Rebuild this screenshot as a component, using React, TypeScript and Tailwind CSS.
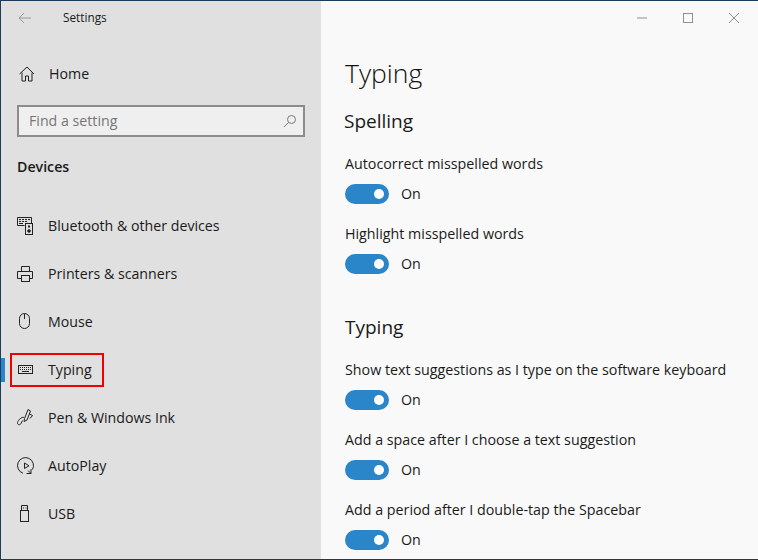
import React from "react";

const font = { fontFamily: '"Open Sans", "Noto Sans", sans-serif' };

function BluetoothIcon() {
  return (
    <svg width="18" height="18" viewBox="0 0 18 18" fill="none" stroke="#222" strokeWidth="1">
      <path d="M.5.5h14v6M.5.5v8h7" />
      <path d="M2 2.500h2M5 2.500h2M8 2.500h2M11 2.500h2M2 4.500h2M5 4.500h2M8 4.500h2M2 6.500h4" />
      <rect x="8.500" y="6.500" width="7" height="11" />
      <circle cx="12" cy="14" r="1.300" fill="#222" />
      <path d="M11 9.500h2" strokeWidth="2" />
    </svg>
  );
}

function PrinterIcon() {
  return (
    <svg width="18" height="18" viewBox="0 0 18 18" fill="none" stroke="#222" strokeWidth="1">
      <path d="M4.500 6.500v-5h8v5M4.500 13.500h-4v-7h15v7h-3" />
      <rect x="4.500" y="10.500" width="8" height="6" />
    </svg>
  );
}

function MouseIcon() {
  return (
    <svg width="18" height="18" viewBox="0 0 18 18" fill="none" stroke="#222" strokeWidth="1">
      <rect x="2.500" y=".5" width="10" height="15" rx="5" />
      <path d="M7.500 1v5" />
    </svg>
  );
}

function KeyboardIcon() {
  return (
    <svg width="16" height="12" viewBox="0 0 16 12" fill="none" stroke="#222" strokeWidth="1">
      <rect x=".5" y="1.500" width="14" height="8" />
      <path d="M2 3.500h11M2 5.500h11" strokeDasharray="1 1" />
      <path d="M4 7.500h7" />
    </svg>
  );
}

function PenIcon() {
  return (
    <svg width="18" height="18" viewBox="0 0 18 18" fill="none" stroke="#222" strokeWidth="1">
      <path d="M7.500 9.500l3.500-9 2.500 1.500-3.500 9" />
      <path d="M7.500 9.500l-.5 3 3-1.500" />
      <path d="M12.500 5l3 1.500-2.500 3" />
      <path d="M7 8.500c-2-1-6 2.500-6.500 5-.3 2.500 2.500 3 3.500 1l1.500-3" />
    </svg>
  );
}

function AutoPlayIcon() {
  return (
    <svg width="18" height="18" viewBox="0 0 18 18" fill="none" stroke="#222" strokeWidth="1">
      <path d="M6 16.200a8 8 0 1 1 9.500-3.700" />
      <path d="M7.500 6v5.500l4.500-2.700z" />
      <path d="M14 12v4.500h-4.500M14 16.500l-3-3" />
    </svg>
  );
}

function UsbIcon() {
  return (
    <svg width="18" height="18" viewBox="0 0 18 18" fill="none" stroke="#222" strokeWidth="1">
      <rect x="3.500" y="5.500" width="8" height="11" />
      <path d="M4.500 5.500v-5h6v5" />
      <path d="M6 3h1M8.500 3h1" />
    </svg>
  );
}

function HomeIcon() {
  return (
    <svg width="16" height="16" viewBox="0 0 16 16" fill="none" stroke="#222" strokeWidth="1">
      <path d="M.5 8L8 1l7 7" />
      <path d="M3 6.500v8.500h3.500v-5h3v5H13v-8.500" />
    </svg>
  );
}

const navItems = [
  { label: "Bluetooth & other devices", icon: <BluetoothIcon /> },
  { label: "Printers & scanners", icon: <PrinterIcon /> },
  { label: "Mouse", icon: <MouseIcon /> },
  { label: "Typing", icon: <KeyboardIcon />, active: true },
  { label: "Pen & Windows Ink", icon: <PenIcon /> },
  { label: "AutoPlay", icon: <AutoPlayIcon /> },
  { label: "USB", icon: <UsbIcon /> },
];

function Toggle({ label }: { label: string }) {
  return (
    <div className="h-[70px]">
      <div className="text-[14.270px] leading-5 text-[#1a1a1a]">{label}</div>
      <div className="mt-[10px] flex items-center gap-[12px]">
        <div className="flex h-5 w-11 items-center justify-end rounded-full bg-[#2a86c8] pr-[5px]">
          <div className="h-[10px] w-[10px] rounded-full bg-white" />
        </div>
        <span className="text-[14.270px] leading-5 text-[#1a1a1a]">On</span>
      </div>
    </div>
  );
}

export default function App() {
  return (
    <div
      className="flex h-[560px] w-[758px] overflow-hidden border-l border-t border-b border-[#1f3a5a] bg-[#f9f9f9]"
      style={font}
    >
      <aside className="flex w-[320px] shrink-0 flex-col bg-[#e0e0e0]">
        <div className="flex h-[33px] items-center pl-[17px]">
          <svg width="14" height="12" viewBox="0 0 14 12" fill="none" stroke="#9a9a9a" strokeWidth="1">
            <path d="M13 6H1M6 1L1 6l5 5" />
          </svg>
          <span className="ml-[31px] text-[11.800px] text-[#1a1a1a]">Settings</span>
        </div>

        <div className="mt-[16px] flex h-[48px] items-center pl-[18px]">
          <HomeIcon />
          <span className="ml-[14px] text-[14.200px] text-[#1a1a1a]">Home</span>
        </div>

        <div className="ml-[16px] mt-[7px] flex h-[32px] w-[288px] items-center justify-between border-2 border-[#8c8c8c] bg-[#efefef] pl-[10px] pr-[6px]">
          <span className="text-[14.200px] text-[#767676]">Find a setting</span>
          <svg width="14" height="14" viewBox="0 0 14 14" fill="none" stroke="#777" strokeWidth="1">
            <circle cx="8.500" cy="5.500" r="4" />
            <path d="M5.500 8.500L1 13" />
          </svg>
        </div>

        <div className="ml-[16px] mt-[20px] text-[14.200px] font-semibold leading-5 text-[#1a1a1a]">Devices</div>

        <nav className="mt-[25px]">
          {navItems.map((item) => (
            <div key={item.label} className="relative flex h-12 items-center pl-[16px]">
              {item.active && (
                <>
                  <div className="absolute left-0 top-3 h-6 w-1 bg-[#2a86c8]" />
                  <div className="absolute left-[9px] top-[7px] h-[34px] w-[94px] border-2 border-[#ee0000]" />
                </>
              )}
              <span className="flex w-[18px] justify-center">{item.icon}</span>
              <span className="ml-[13px] text-[14.200px] text-[#1a1a1a]">{item.label}</span>
            </div>
          ))}
        </nav>
      </aside>

      <main className="flex-1 pl-[24px]">
        <div className="flex h-[33px] items-center justify-end">
          <svg width="10" height="2" viewBox="0 0 10 2" className="mr-[36px]" stroke="#8f8f8f">
            <path d="M0 1h10" />
          </svg>
          <svg width="10" height="10" viewBox="0 0 10 10" className="mr-[36px]" fill="none" stroke="#8f8f8f">
            <rect x=".5" y=".5" width="9" height="9" />
          </svg>
          <svg width="10" height="10" viewBox="0 0 10 10" className="mr-[19px]" fill="none" stroke="#8f8f8f">
            <path d="M0 0l10 10M10 0L0 10" />
          </svg>
        </div>

        <h1 className="mt-[20px] text-[26.500px] font-light leading-[38px] text-[#111111]">Typing</h1>
        <h2 className="mt-[16px] -ml-px text-[19px] leading-[26px] text-[#1a1a1a]">Spelling</h2>

        <div className="mt-[20px]">
          <Toggle label="Autocorrect misspelled words" />
          <Toggle label="Highlight misspelled words" />
        </div>

        <h2 className="mt-[20px] text-[19px] leading-[26px] text-[#1a1a1a]">Typing</h2>

        <div className="mt-[20px]">
          <Toggle label="Show text suggestions as I type on the software keyboard" />
          <Toggle label="Add a space after I choose a text suggestion" />
          <Toggle label="Add a period after I double-tap the Spacebar" />
        </div>
      </main>
    </div>
  );
}
